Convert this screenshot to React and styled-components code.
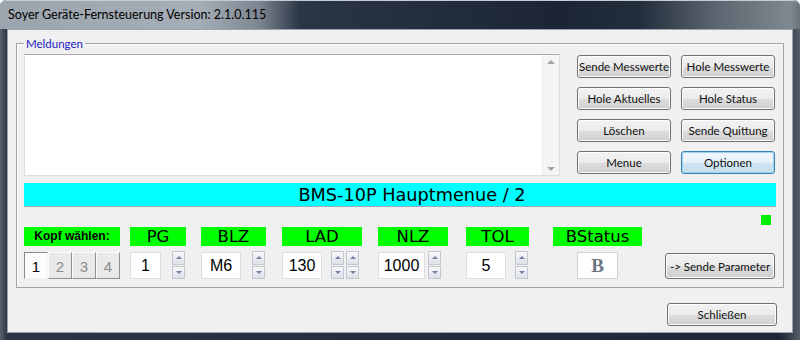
import React from "react";
import styled, { createGlobalStyle } from "styled-components";

const Global = createGlobalStyle`
	html, body { margin: 0; padding: 0; background: #fff; }
	* { box-sizing: border-box; }
`;

const Window = styled.div`
	width: 800px;
	height: 340px;
	display: flex;
	flex-direction: column;
	background: linear-gradient(90deg, #59616b 0px, #2a3545 7px, #1c2737 780px, #555d66 800px);
	border-radius: 6px 6px 0 0;
	padding: 0 7px 7px 7px;
	font-family: Lato, "Liberation Sans", sans-serif;
	overflow: hidden;
`;

const TitleBar = styled.div`
	height: 29px;
	margin: 0 -7px;
	padding: 0 0 0 8px;
	display: flex;
	align-items: center;
	font-size: 12.5px;
	color: #000;
	border-radius: 6px 6px 0 0;
	background: linear-gradient(
		90deg,
		#9ca4ad 0px,
		#a5adb6 200px,
		#7c8590 260px,
		#2a3545 300px,
		#1b2535 560px,
		#232e3d 640px,
		#5f6872 720px,
		#7f878f 790px,
		#6a727b 800px
	);
	box-shadow: inset 0 1px 0 #c8ccd1;
`;

const Client = styled.div`
	flex: 1;
	display: flex;
	flex-direction: column;
	background: #f0f0f0;
	border: 1px solid #9aa2ab;
`;

const Group = styled.div`
	position: relative;
	margin: 13px 8px 0 8px;
	height: 245px;
	border: 1px solid #a3a3a3;
	box-shadow: inset 1px 1px 0 #fff;
	padding: 10px 6px 0 7px;
`;

const Legend = styled.span`
	position: absolute;
	left: 7px;
	top: -8px;
	padding: 0 2px;
	background: #f0f0f0;
	color: #2222c4;
	font-size: 11.5px;
	line-height: 16px;
`;

const TopRow = styled.div`
	display: flex;
	gap: 17px;
`;

const MessageBox = styled.div`
	width: 536px;
	height: 122px;
	display: flex;
	background: #fff;
	border: 1px solid #dcdde2;
	border-top-color: #a9a9a9;
`;

const MessageText = styled.div`
	flex: 1;
`;

const ScrollBar = styled.div`
	width: 17px;
	display: flex;
	flex-direction: column;
	justify-content: space-between;
	align-items: center;
	padding: 5px 0 4px;
	background: #f5f5f5;
	border-left: 1px solid #ececec;
`;

const Arrow = styled.div`
	width: 0;
	height: 0;
	border-left: 4px solid transparent;
	border-right: 4px solid transparent;
	${({ $down }) =>
		$down ? "border-top: 4px solid #a6a6a6;" : "border-bottom: 4px solid #a6a6a6;"}
`;

const ButtonGrid = styled.div`
	display: grid;
	grid-template-columns: 94px 94px;
	grid-auto-rows: 23px;
	column-gap: 10px;
	row-gap: 9px;
	margin-top: 1px;
`;

const Button = styled.button`
	width: ${({ $w }) => ($w ? `${$w}px` : "auto")};
	height: ${({ $h }) => ($h ? `${$h}px` : "23px")};
	margin-left: ${({ $ml }) => $ml || 0}px;
	padding: 0;
	white-space: nowrap;
	font-family: Lato, "Liberation Sans", sans-serif;
	font-size: 11.5px;
	color: #111;
	border-radius: 3px;
	border: 1px solid ${({ $default }) => ($default ? "#3c7fb1" : "#707070")};
	background: ${({ $default }) =>
		$default
			? "linear-gradient(#f2f8fc 0%, #e4f0f8 50%, #d2e6f3 51%, #c4ddef 100%)"
			: "linear-gradient(#f2f2f2 0%, #ebebeb 50%, #dddddd 51%, #cfcfcf 100%)"};
	box-shadow: inset 0 0 0 1px ${({ $default }) => ($default ? "#9fd2f0" : "#fcfcfc")};
	cursor: default;
`;

const TitleStrip = styled.div`
	margin-top: 7px;
	height: 24px;
	width: 752px;
	padding-left: 24px;
	background: #00ffff;
	border-bottom: 1px solid #9ab;
	display: flex;
	align-items: center;
	justify-content: center;
	font-family: "DejaVu Sans", "Liberation Sans", sans-serif;
	font-size: 17.7px;
	color: #000;
`;

const IndicatorRow = styled.div`
	display: flex;
	justify-content: flex-end;
	margin-top: 8px;
	padding-right: 6px;
`;

const Led = styled.div`
	width: 10px;
	height: 10px;
	background: #00ee00;
`;

const ParamRow = styled.div`
	display: flex;
	align-items: flex-end;
	margin-top: 2px;
`;

const Param = styled.div`
	width: ${({ $w }) => $w}px;
	margin-left: ${({ $ml }) => $ml || 0}px;
	display: flex;
	flex-direction: column;
	gap: 5px;
`;

const Label = styled.div`
	height: 19px;
	background: #00ff00;
	text-align: center;
	font-family: ${({ $small }) =>
		$small ? '"Liberation Sans", Arial, sans-serif' : '"DejaVu Sans", "Liberation Sans", sans-serif'};
	font-size: ${({ $small }) => ($small ? "12px" : "16.5px")};
	font-weight: ${({ $small }) => ($small ? "bold" : "normal")};
	line-height: 19px;
	color: #000;
`;

const Controls = styled.div`
	display: flex;
	align-items: flex-start;
	height: 28px;
	padding-left: ${({ $pl }) => $pl || 0}px;
`;

const ValueBox = styled.div`
	width: ${({ $w }) => $w}px;
	height: 27px;
	margin-top: 1px;
	background: #fff;
	border: 1px solid #dedede;
	display: flex;
	align-items: center;
	justify-content: center;
	font-family: "Liberation Sans", Arial, sans-serif;
	font-size: 16px;
	color: #000;
`;

const StatusLetter = styled(ValueBox)`
	font-family: "Liberation Serif", "Times New Roman", serif;
	font-weight: bold;
	font-size: 19px;
	color: #6c7682;
	border-color: #d2d2d2;
`;

const Spin = styled.div`
	margin-left: ${({ $ml }) => $ml}px;
	width: 13px;
	height: 28px;
	display: flex;
	flex-direction: column;
	gap: 1px;
`;

const SpinHalf = styled.div`
	flex: 1;
	display: flex;
	align-items: center;
	justify-content: center;
	border: 1px solid #c3c8d0;
	background: linear-gradient(#f7f8fa, #dde2e8);
`;

const SpinArrow = styled.div`
	width: 0;
	height: 0;
	border-left: 3.5px solid transparent;
	border-right: 3.5px solid transparent;
	${({ $down }) =>
		$down ? "border-top: 3px solid #7080a0;" : "border-bottom: 3px solid #7080a0;"}
`;

const HeadToggles = styled.div`
	display: flex;
	height: 28px;
	padding-top: 1px;
`;

const HeadToggle = styled.div`
	width: 24px;
	height: 27px;
	display: flex;
	align-items: flex-end;
	justify-content: center;
	padding-bottom: 3px;
	font-family: "Liberation Sans", Arial, sans-serif;
	font-size: 15px;
	color: ${({ $on }) => ($on ? "#000" : "#8c8c8c")};
	background: ${({ $on }) => ($on ? "#fbfbfb" : "#e9e9e9")};
	border: 1px solid;
	border-color: ${({ $on }) =>
		$on ? "#8a8a8a #f4f4f4 #f4f4f4 #8a8a8a" : "#fcfcfc #8f8f8f #8f8f8f #fcfcfc"};
`;

const Footer = styled.div`
	display: flex;
	justify-content: flex-end;
	padding: 15px 15px 0 0;
`;

const Spinner = ({ ml }) => (
	<Spin $ml={ml}>
		<SpinHalf>
			<SpinArrow />
		</SpinHalf>
		<SpinHalf>
			<SpinArrow $down />
		</SpinHalf>
	</Spin>
);

const params = [
	{ name: "PG", value: "1", w: 56, ml: 10, box: 31, spins: [11] },
	{ name: "BLZ", value: "M6", w: 65, ml: 15, box: 40, spins: [11] },
	{ name: "LAD", value: "130", w: 80, ml: 16, box: 40, spins: [9, 2] },
	{ name: "NLZ", value: "1000", w: 70, ml: 16, box: 47, spins: [3] },
	{ name: "TOL", value: "5", w: 63, ml: 18, box: 40, spins: [9] },
];

const App = () => {
	return (
		<>
			<Global />
			<Window>
				<TitleBar>Soyer Geräte-Fernsteuerung Version: 2.1.0.115</TitleBar>
				<Client>
					<Group>
						<Legend>Meldungen</Legend>
						<TopRow>
							<MessageBox>
								<MessageText />
								<ScrollBar>
									<Arrow />
									<Arrow $down />
								</ScrollBar>
							</MessageBox>
							<ButtonGrid>
								<Button>Sende Messwerte</Button>
								<Button>Hole Messwerte</Button>
								<Button>Hole Aktuelles</Button>
								<Button>Hole Status</Button>
								<Button>Löschen</Button>
								<Button>Sende Quittung</Button>
								<Button>Menue</Button>
								<Button $default>Optionen</Button>
							</ButtonGrid>
						</TopRow>
						<TitleStrip>BMS-10P Hauptmenue / 2</TitleStrip>
						<IndicatorRow>
							<Led />
						</IndicatorRow>
						<ParamRow>
							<Param $w={96}>
								<Label $small>Kopf wählen:</Label>
								<HeadToggles>
									{["1", "2", "3", "4"].map((n) => (
										<HeadToggle key={n} $on={n === "1"}>
											{n}
										</HeadToggle>
									))}
								</HeadToggles>
							</Param>
							{params.map((p) => (
								<Param key={p.name} $w={p.w} $ml={p.ml}>
									<Label>{p.name}</Label>
									<Controls>
										<ValueBox $w={p.box}>{p.value}</ValueBox>
										{p.spins.map((s, i) => (
											<Spinner key={i} ml={s} />
										))}
									</Controls>
								</Param>
							))}
							<Param $w={89} $ml={24}>
								<Label>BStatus</Label>
								<Controls $pl={24}>
									<StatusLetter $w={41}>B</StatusLetter>
								</Controls>
							</Param>
							<Button $w={110} $h={26} $ml={23}>
								-&gt; Sende Parameter
							</Button>
						</ParamRow>
					</Group>
					<Footer>
						<Button $w={110}>Schließen</Button>
					</Footer>
				</Client>
			</Window>
		</>
	);
};

export default App;
